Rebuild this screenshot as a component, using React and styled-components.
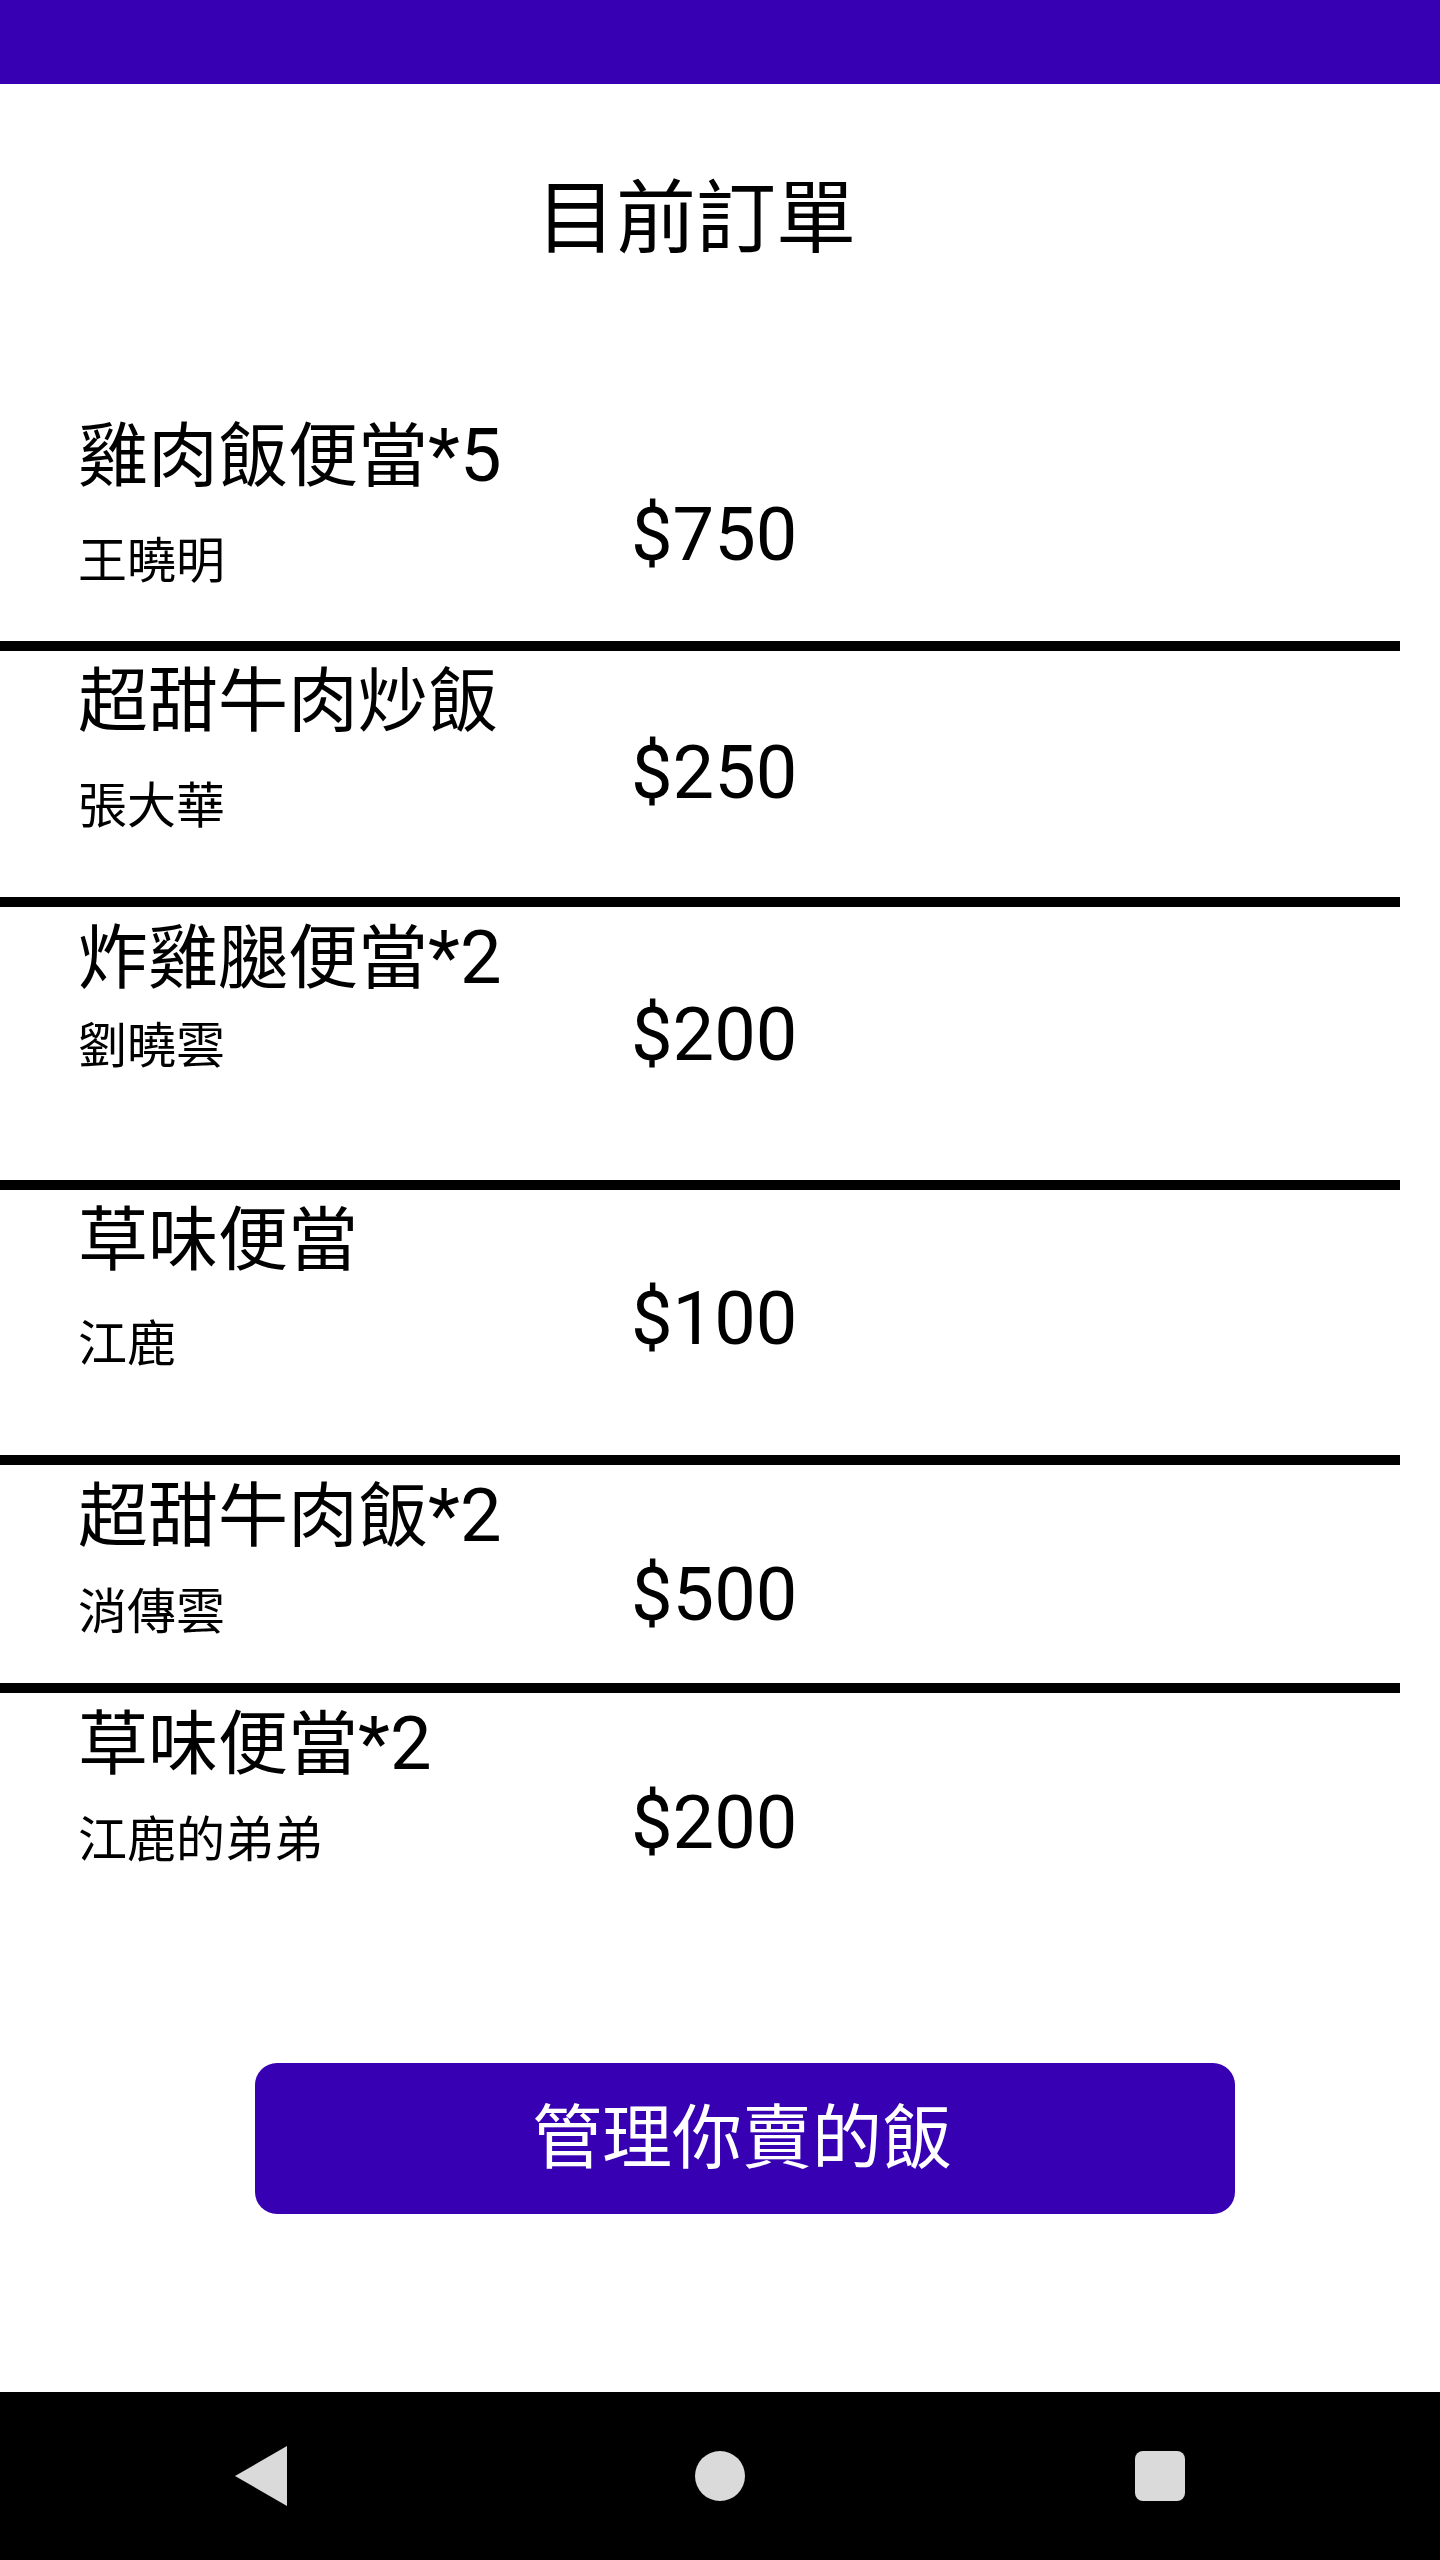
import React from "react"
import styled, { createGlobalStyle } from "styled-components"

const orders = [
  { name: "雞肉飯便當", qty: 5, customer: "王曉明", price: 750, subGap: 45, priceTop: 77, height: 246 },
  { name: "超甜牛肉炒飯", customer: "張大華", price: 250, subGap: 45, priceTop: 69, height: 256 },
  { name: "炸雞腿便當", qty: 2, customer: "劉曉雲", price: 200, subGap: 28, priceTop: 75, height: 283 },
  { name: "草味便當", customer: "江鹿", price: 100, subGap: 44, priceTop: 76, height: 275 },
  { name: "超甜牛肉飯", qty: 2, customer: "消傳雲", price: 500, subGap: 36, priceTop: 77, height: 228 },
  { name: "草味便當", qty: 2, customer: "江鹿的弟弟", price: 200, subGap: 36, priceTop: 77 }
]

const GlobalStyle = createGlobalStyle`
  body {
    margin: 0;
    background: #fff;
    font-family: Roboto, "Noto Sans CJK TC", sans-serif;
    color: #000;
  }
`

const Screen = styled.div`
  width: 1440px;
  height: 2560px;
  display: flex;
  flex-direction: column;
  overflow: hidden;
`
const StatusBar = styled.div`
  height: 84px;
  flex-shrink: 0;
  background: #3700b3;
`
const Title = styled.h1`
  margin: 95px 0 0;
  width: 1392px;
  text-align: center;
  font-size: 80px;
  font-weight: 400;
  line-height: 1;
`
const OrderList = styled.div`
  margin-top: 146px;
  display: flex;
  flex-direction: column;
`
const OrderRow = styled.div`
  box-sizing: border-box;
  width: 1400px;
  height: ${p => (p.$h ? `${p.$h}px` : "auto")};
  padding: 16px 0 0 78px;
  display: grid;
  grid-template-columns: 553px 1fr;
  align-items: start;
  border-bottom: ${p => (p.$last ? "none" : "10px solid #000")};
`
const OrderInfo = styled.div`
  display: flex;
  flex-direction: column;
`
const MealName = styled.div`
  font-size: 70px;
  line-height: 70px;
`
const Qty = styled.span`
  font-size: 74px;
`
const Customer = styled.div`
  margin-top: ${p => p.$gap}px;
  font-size: 49px;
  line-height: 1;
`
const Price = styled.div`
  margin-top: ${p => p.$top}px;
  font-size: 74px;
  line-height: 1;
`
const ManageButton = styled.button`
  margin: 198px 0 0 255px;
  width: 980px;
  height: 151px;
  border: none;
  border-radius: 22px;
  background: #3700b3;
  color: #fff;
  font-family: Roboto, "Noto Sans CJK TC", sans-serif;
  font-size: 70px;
  line-height: 1;
  padding: 0 6px 0 0;
`
const NavBar = styled.div`
  margin-top: auto;
  height: 168px;
  flex-shrink: 0;
  background: #000;
  display: flex;
  align-items: center;
  padding-left: 235px;
`
const NavKey = styled.div`
  margin-left: ${p => p.$offset || 0}px;
  display: flex;
`
const HomeDot = styled.div`
  width: 50px;
  height: 50px;
  border-radius: 50%;
  background: #dadada;
`
const RecentsBox = styled.div`
  width: 50px;
  height: 50px;
  border-radius: 8px;
  background: #dadada;
`

export default function App() {
  return (
    <>
      <GlobalStyle />
      <Screen>
        <StatusBar />
        <Title>目前訂單</Title>
        <OrderList>
          {orders.map((o, i) => (
            <OrderRow key={i} $h={o.height} $last={i === orders.length - 1}>
              <OrderInfo>
                <MealName>
                  {o.name}
                  {o.qty && <Qty>*{o.qty}</Qty>}
                </MealName>
                <Customer $gap={o.subGap}>{o.customer}</Customer>
              </OrderInfo>
              <Price $top={o.priceTop}>${o.price}</Price>
            </OrderRow>
          ))}
        </OrderList>
        <ManageButton>管理你賣的飯</ManageButton>
        <NavBar>
          <NavKey>
            <svg width="52" height="60" viewBox="0 0 52 60">
              <polygon points="52,0 52,60 0,30" fill="#dadada" />
            </svg>
          </NavKey>
          <NavKey $offset={408}>
            <HomeDot />
          </NavKey>
          <NavKey $offset={390}>
            <RecentsBox />
          </NavKey>
        </NavBar>
      </Screen>
    </>
  )
}
